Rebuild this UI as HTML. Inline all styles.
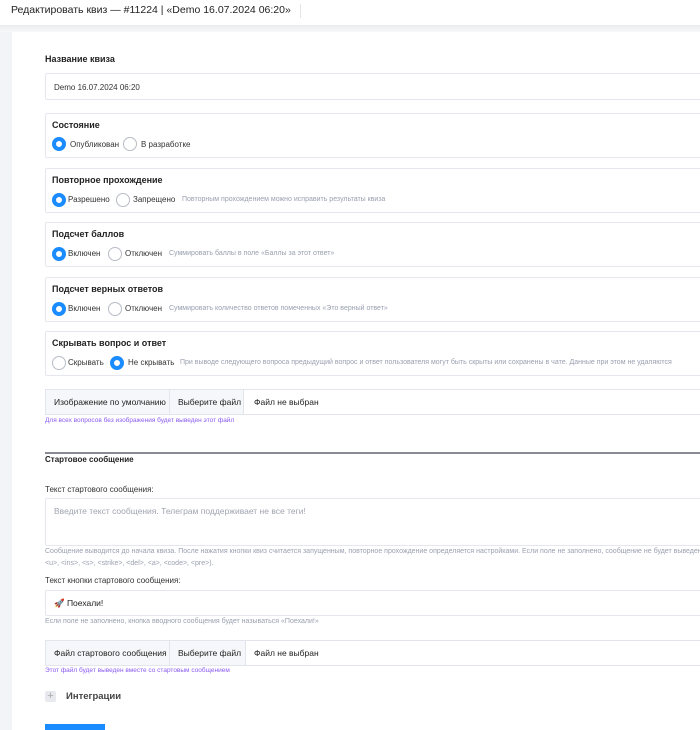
<!DOCTYPE html>
<html><head><meta charset="utf-8"><style>
*{margin:0;padding:0;box-sizing:border-box}
html,body{width:700px;height:730px;overflow:hidden}
body{background:#f3f4f7;font-family:"Liberation Sans","DejaVu Sans",sans-serif;color:#222;position:relative}
.a{position:absolute;white-space:nowrap}
#hdr{left:0;top:0;width:700px;height:25px;background:#fff}
#card{left:12px;top:32px;width:700px;height:720px;background:#fff}
.box{position:absolute;left:45px;width:680px;border:1px solid #e6e7ee;background:#fff;border-radius:2px}
.t{font-size:9px;font-weight:bold;color:#222}
.r{font-size:8px;color:#333}
.h{font-size:7px;color:#9aa0b0}
.rad{position:absolute;width:14px;height:14px;border-radius:50%;border:1px solid #b8bcc6;background:#fff}
.rad.on{border:4px solid #1a8cff}
.fr{position:absolute;left:45px;width:680px;height:26px;border:1px solid #e3e5ec;font-size:8.5px;color:#222}
.fr div{position:absolute;top:0;height:24px;line-height:24px}
.pu{font-size:6.5px;color:#8a5cf0}
</style></head><body>
<div class="a" id="hdr"></div>
<div class="a" style="left:11px;top:4px;font-size:10.5px;color:#222">Редактировать квиз — #11224 | «Demo 16.07.2024 06:20»</div>
<div class="a" style="left:300px;top:4px;width:1px;height:14px;background:#e3e4e8"></div>
<div class="a" style="left:0;top:25px;width:700px;height:7px;background:linear-gradient(#e9ebef,#f7f8fa)"></div>
<div class="a" id="card"></div>

<div class="a t" style="left:45px;top:54px">Название квиза</div>
<div class="box" style="top:73px;height:27px"><span class="a" style="left:8px;top:9px;font-size:8px;color:#333">Demo 16.07.2024 06:20</span></div>

<div class="box" style="top:113px;height:45px">
<div class="a t" style="left:6px;top:6px">Состояние</div>
<div class="rad on" style="left:6px;top:23px"></div><div class="a r" style="left:24px;top:26px">Опубликован</div>
<div class="rad" style="left:77px;top:23px"></div><div class="a r" style="left:95px;top:26px">В разработке</div>
</div>

<div class="box" style="top:168px;height:45px">
<div class="a t" style="left:6px;top:6px">Повторное прохождение</div>
<div class="rad on" style="left:6px;top:24px"></div><div class="a r" style="left:22px;top:26px">Разрешено</div>
<div class="rad" style="left:70px;top:24px"></div><div class="a r" style="left:87px;top:26px">Запрещено</div>
<div class="a h" style="left:136px;top:27px">Повторным прохождением можно исправить результаты квиза</div>
</div>

<div class="box" style="top:222px;height:45px">
<div class="a t" style="left:6px;top:6px">Подсчет баллов</div>
<div class="rad on" style="left:6px;top:24px"></div><div class="a r" style="left:22px;top:26px">Включен</div>
<div class="rad" style="left:62px;top:24px"></div><div class="a r" style="left:79px;top:26px">Отключен</div>
<div class="a h" style="left:123px;top:27px">Суммировать баллы в поле «Баллы за этот ответ»</div>
</div>

<div class="box" style="top:277px;height:45px">
<div class="a t" style="left:6px;top:6px">Подсчет верных ответов</div>
<div class="rad on" style="left:6px;top:24px"></div><div class="a r" style="left:22px;top:26px">Включен</div>
<div class="rad" style="left:62px;top:24px"></div><div class="a r" style="left:79px;top:26px">Отключен</div>
<div class="a h" style="left:123px;top:27px">Суммировать количество ответов помеченных «Это верный ответ»</div>
</div>

<div class="box" style="top:331px;height:45px">
<div class="a t" style="left:6px;top:6px">Скрывать вопрос и ответ</div>
<div class="rad" style="left:6px;top:24px"></div><div class="a r" style="left:22px;top:26px">Скрывать</div>
<div class="rad on" style="left:64px;top:24px"></div><div class="a r" style="left:82px;top:26px">Не скрывать</div>
<div class="a h" style="left:134px;top:27px">При выводе следующего вопроса предыдущий вопрос и ответ пользователя могут быть скрыты или сохранены в чате. Данные при этом не удаляются</div>
</div>

<div class="fr" style="top:389px"><div style="left:0;width:124px;background:#f5f7fa;border-right:1px solid #e3e5ec;padding-left:8px">Изображение по умолчанию</div><div style="left:124px;width:74px;background:#f5f7fa;border-right:1px solid #e3e5ec;padding-left:8px">Выберите файл</div><div style="left:208px">Файл не выбран</div></div>
<div class="a pu" style="left:45px;top:417px">Для всех вопросов без изображения будет выведен этот файл</div>

<div class="a" style="left:45px;top:452px;width:660px;height:2px;background:#888b94"></div>
<div class="a" style="left:45px;top:455px;font-size:8px;font-weight:bold;color:#222">Стартовое сообщение</div>

<div class="a" style="left:45px;top:485px;font-size:8px;color:#333">Текст стартового сообщения:</div>
<div class="box" style="top:498px;height:48px"><span class="a" style="left:8px;top:7px;font-size:8.5px;color:#a0a4b0">Введите текст сообщения. Телеграм поддерживает не все теги!</span></div>
<div class="a h" style="left:45px;top:548px">Сообщение выводится до начала квиза. После нажатия кнопки квиз считается запущенным, повторное прохождение определяется настройками. Если поле не заполнено, сообщение не будет выведено, будут</div>
<div class="a h" style="left:45px;top:560px">&lt;u&gt;, &lt;ins&gt;, &lt;s&gt;, &lt;strike&gt;, &lt;del&gt;, &lt;a&gt;, &lt;code&gt;, &lt;pre&gt;).</div>

<div class="a" style="left:45px;top:576px;font-size:8px;color:#333">Текст кнопки стартового сообщения:</div>
<div class="box" style="top:590px;height:26px"><span class="a" style="left:8px;top:7px;font-size:8.5px;color:#222">🚀 Поехали!</span></div>
<div class="a h" style="left:45px;top:618px">Если поле не заполнено, кнопка вводного сообщения будет называться «Поехали!»</div>

<div class="fr" style="top:640px"><div style="left:0;width:124px;background:#f5f7fa;border-right:1px solid #e3e5ec;padding-left:8px">Файл стартового сообщения</div><div style="left:124px;width:76px;background:#f5f7fa;border-right:1px solid #e3e5ec;padding-left:8px">Выберите файл</div><div style="left:208px">Файл не выбран</div></div>
<div class="a pu" style="left:45px;top:667px">Этот файл будет выведен вместе со стартовым сообщением</div>

<div class="a" style="left:45px;top:691px;width:11px;height:11px;background:#e8e9ee;border-radius:2px;color:#aaa;font-size:11px;line-height:11px;text-align:center">+</div>
<div class="a" style="left:66px;top:691px;font-size:9.5px;font-weight:bold;color:#444">Интеграции</div>

<div class="a" style="left:45px;top:724px;width:60px;height:10px;background:#1a8cff"></div>
</body></html>
